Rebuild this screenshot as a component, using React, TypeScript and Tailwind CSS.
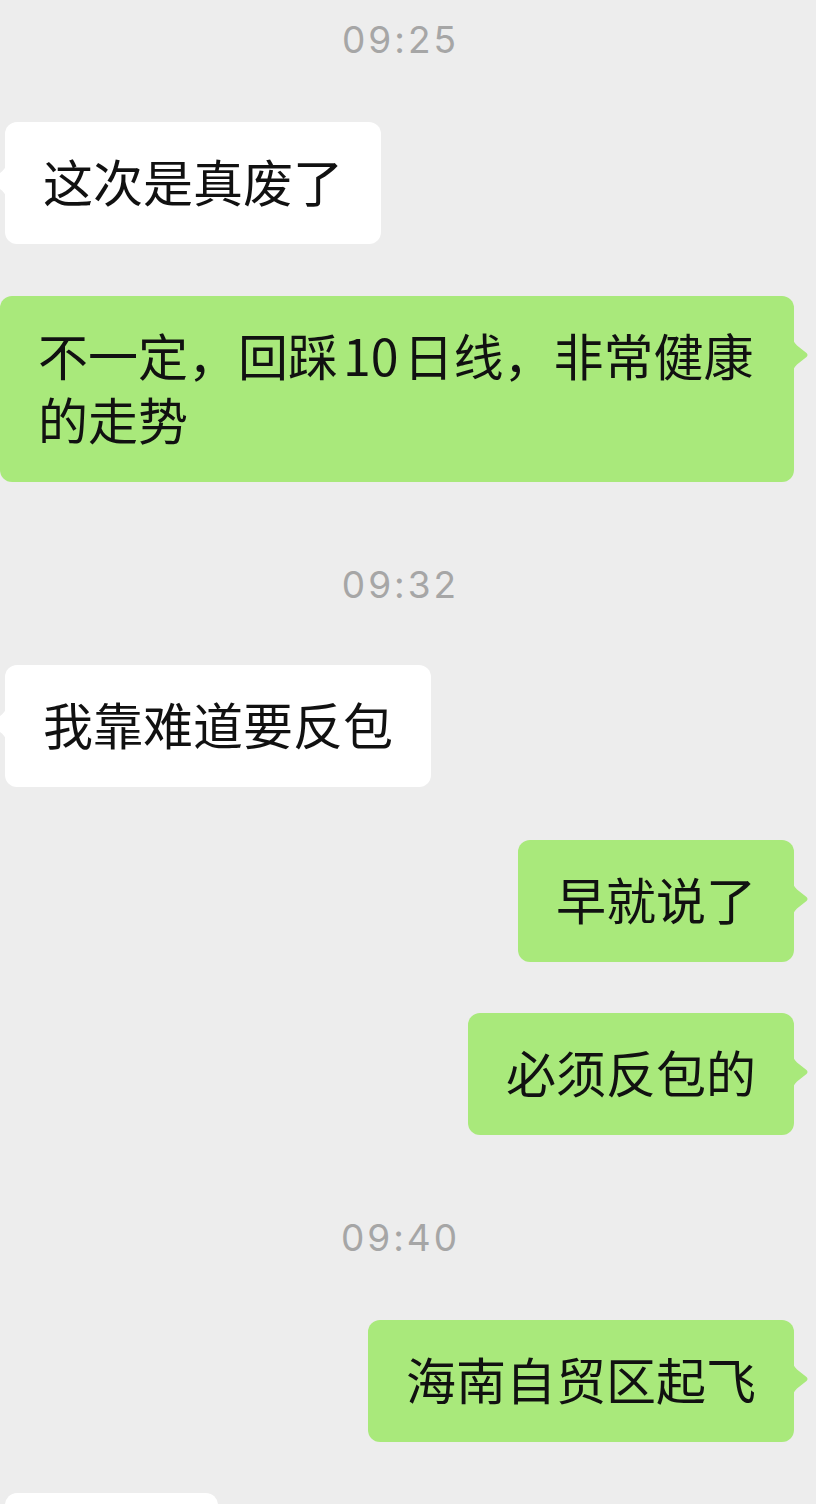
import React from 'react';

type Msg =
  | { kind: 'time'; text: string; mt: string }
  | { kind: 'in' | 'out'; text: React.ReactNode; mt: string; wide?: boolean };

const messages: Msg[] = [
  { kind: 'time', text: '09:25', mt: 'mt-[20px]' },
  { kind: 'in', text: '这次是真废了', mt: 'mt-[62px]' },
  {
    kind: 'out',
    text: (
      <>
        不一定，回踩<span className="mx-[5px]">10</span>日线，非常健康
        <br />
        的走势
      </>
    ),
    mt: 'mt-[52px]',
    wide: true,
  },
  { kind: 'time', text: '09:32', mt: 'mt-[83px]' },
  { kind: 'in', text: '我靠难道要反包', mt: 'mt-[60px]' },
  { kind: 'out', text: '早就说了', mt: 'mt-[53px]' },
  { kind: 'out', text: '必须反包的', mt: 'mt-[51px]' },
  { kind: 'time', text: '09:40', mt: 'mt-[83px]' },
  { kind: 'out', text: '海南自贸区起飞', mt: 'mt-[62px]' },
  { kind: 'in', text: '', mt: 'mt-[51px]' },
];

const Tail = ({ side, color }: { side: 'left' | 'right'; color: string }) => (
  <svg
    width="16"
    height="30"
    viewBox="0 0 16 30"
    className={`absolute top-[44px] ${side === 'right' ? 'right-[-15px]' : 'left-[-15px] -scale-x-100'}`}
  >
    <path d="M0 0 Q1.5 3 4 5.5 L13.5 13 Q15.5 15 13.5 17 L4 24.5 Q1.5 27 0 30 Z" fill={color} />
  </svg>
);

const Bubble = ({ msg }: { msg: Extract<Msg, { kind: 'in' | 'out' }> }) => {
  const out = msg.kind === 'out';
  const color = out ? '#a9e97b' : '#ffffff';
  return (
    <div className={`flex ${msg.mt} ${out ? 'justify-end pr-[22px]' : 'justify-start pl-[5px]'}`}>
      <div
        className={`relative rounded-[12px] px-[38px] pt-[26px] pb-[32px] text-[50px] leading-[64px] text-[#111111] ${
          out ? 'bg-[#a9e97b]' : 'bg-white'
        } ${msg.wide ? 'w-[794px]' : ''} ${msg.text === '' ? 'w-[213px] h-[122px]' : ''}`}
      >
        {msg.text}
        <Tail side={out ? 'right' : 'left'} color={color} />
      </div>
    </div>
  );
};

export default function App() {
  return (
    <div
      className="w-[816px] h-[1504px] overflow-hidden bg-[#ededed]"
      style={{ fontFamily: '"Noto Sans CJK SC", "Noto Sans", sans-serif' }}
    >
      {messages.map((m, i) =>
        m.kind === 'time' ? (
          <div
            key={i}
            className={`${m.mt} h-[40px] pr-[15px] text-center text-[37px] leading-[40px] tracking-[3px] text-[#a6a6a6] font-['Inter',sans-serif]`}
          >
            {m.text}
          </div>
        ) : (
          <Bubble key={i} msg={m} />
        )
      )}
    </div>
  );
}
